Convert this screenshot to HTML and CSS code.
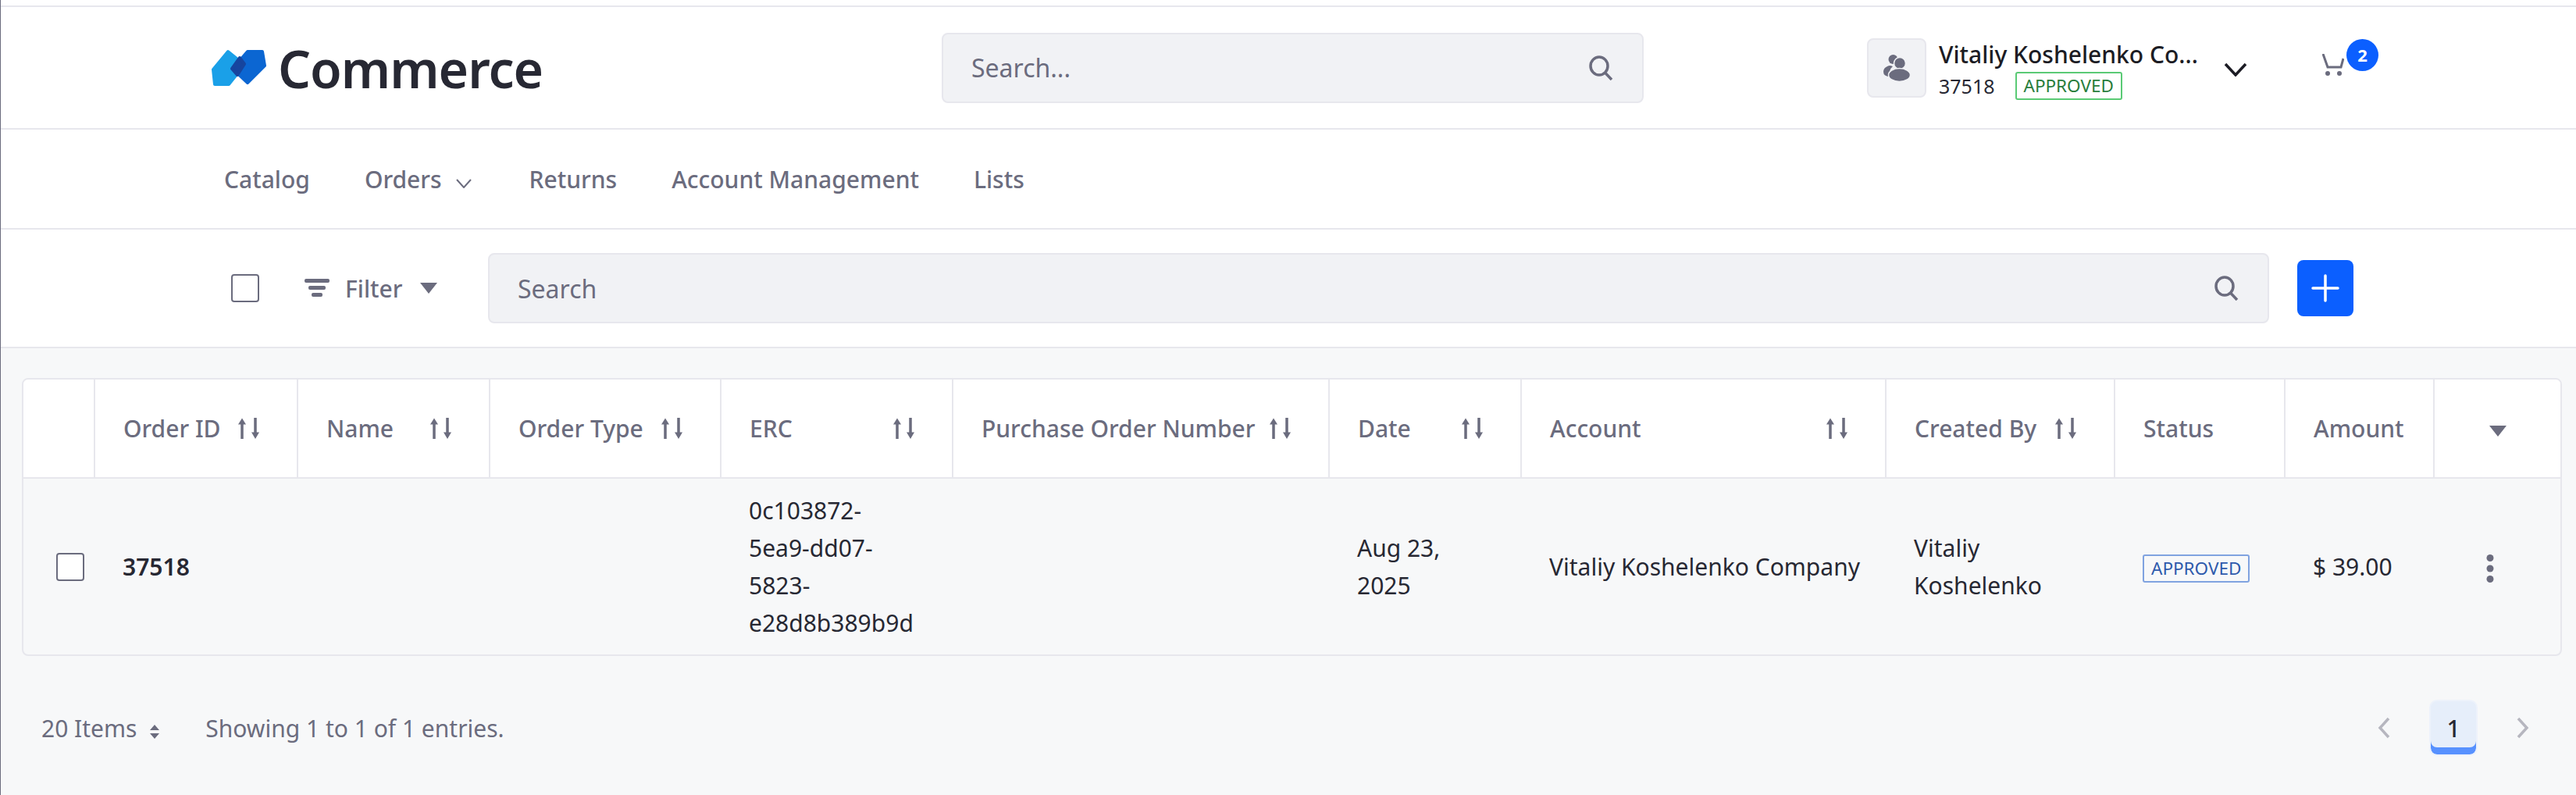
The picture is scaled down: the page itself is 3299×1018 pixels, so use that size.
FILE: index.html
```html
<!DOCTYPE html>
<html lang="en">
<head>
  <meta charset="UTF-8" />
  <title>Commerce - Orders</title>
  <link rel="stylesheet" href="styles.css">
</head>
<body>
  <header class="topbar">
    <div class="brand">
      <svg class="brand-logo" viewBox="0 0 70 48" width="70" height="48">
        <path class="logo-light" d="M21 3 L42 20 L22 45 L4 45 L2 26 Z"/>
        <path class="logo-dark" d="M46 3 L65 3 L68 21 L46 43 L27 25 Z"/>
        <path class="logo-mid" d="M36 11 L42 19 L33 33 L26 25 Z"/>
      </svg>
      <span class="brand-name">Commerce</span>
    </div>
    <div class="top-search">
      <span>Search...</span>
      <svg class="search-icon" viewBox="0 0 32 32" width="32" height="32"><ellipse cx="13" cy="13.500" rx="11" ry="11.500"/><path d="M20.500 22 L29 31"/></svg>
    </div>
    <div class="account">
      <div class="account-pic">
        <svg viewBox="0 0 34 34" width="34" height="34" class="people">
          <circle cx="12.500" cy="6" r="6"/>
          <path d="M5 15 Q8 13 12 15 Q6 20 9 28 Q0 28 0 22 Q0 17 5 15 Z"/>
          <circle class="people-front" cx="21" cy="11" r="7.500"/>
          <ellipse class="people-front" cx="20.500" cy="26" rx="14" ry="8.500"/>
        </svg>
      </div>
      <div class="account-info">
        <div class="account-name">Vitaliy Koshelenko Co...</div>
        <div class="account-meta"><span>37518</span><span class="badge-approved">APPROVED</span></div>
      </div>
      <svg class="account-caret" viewBox="0 0 30 18" width="30" height="18"><path d="M2 2 L15 16 L28 2"/></svg>
    </div>
    <div class="cart">
      <svg viewBox="0 0 28 28" width="28" height="28" class="cart-icon">
        <path d="M1 0 L7 17 H24 L27 6"/>
        <circle cx="7" cy="25" r="3"/><circle cx="22" cy="25" r="3"/>
      </svg>
      <span class="cart-count">2</span>
    </div>
  </header>

  <nav class="mainnav">
    <a>Catalog</a>
    <a>Orders<svg viewBox="0 0 20 12" width="20" height="12"><path d="M1 1 L10 11 L19 1"/></svg></a>
    <a>Returns</a>
    <a>Account Management</a>
    <a>Lists</a>
  </nav>

  <div class="toolbar">
    <span class="checkbox"></span>
    <div class="filter">
      <svg viewBox="0 0 32 24" width="32" height="24"><rect x="0" y="0" width="32" height="5" rx="2"/><rect x="5" y="9" width="22" height="5" rx="2"/><rect x="9" y="18" width="14" height="5" rx="2"/></svg>
      <span>Filter</span>
      <svg class="caret" viewBox="0 0 24 16" width="24" height="16"><path d="M1 1 H23 L12 15 Z"/></svg>
    </div>
    <div class="list-search">
      <span>Search</span>
      <svg class="search-icon" viewBox="0 0 32 32" width="32" height="32"><ellipse cx="13" cy="13.500" rx="11" ry="11.500"/><path d="M20.500 22 L29 31"/></svg>
    </div>
    <button class="add-btn"><svg viewBox="0 0 36 36" width="36" height="36"><path d="M18 2 V34 M2 18 H34"/></svg></button>
  </div>

  <main class="content">
    <table class="orders">
      <colgroup>
        <col class="c-check"><col class="c-id"><col class="c-name"><col class="c-type"><col class="c-erc"><col class="c-po"><col class="c-date"><col class="c-acc"><col class="c-by"><col class="c-status"><col class="c-amount"><col class="c-menu">
      </colgroup>
      <thead>
        <tr>
          <th></th>
          <th><div class="th-in"><span>Order ID</span><svg class="sort" viewBox="0 0 27 27" width="27" height="27"><use href="#sort-arrows"/></svg></div></th>
          <th><div class="th-in"><span>Name</span><svg class="sort" viewBox="0 0 27 27" width="27" height="27"><use href="#sort-arrows"/></svg></div></th>
          <th><div class="th-in"><span>Order Type</span><svg class="sort" viewBox="0 0 27 27" width="27" height="27"><use href="#sort-arrows"/></svg></div></th>
          <th><div class="th-in"><span>ERC</span><svg class="sort" viewBox="0 0 27 27" width="27" height="27"><use href="#sort-arrows"/></svg></div></th>
          <th><div class="th-in"><span>Purchase Order Number</span><svg class="sort" viewBox="0 0 27 27" width="27" height="27"><use href="#sort-arrows"/></svg></div></th>
          <th><div class="th-in"><span>Date</span><svg class="sort" viewBox="0 0 27 27" width="27" height="27"><use href="#sort-arrows"/></svg></div></th>
          <th><div class="th-in"><span>Account</span><svg class="sort" viewBox="0 0 27 27" width="27" height="27"><use href="#sort-arrows"/></svg></div></th>
          <th><div class="th-in"><span>Created By</span><svg class="sort" viewBox="0 0 27 27" width="27" height="27"><use href="#sort-arrows"/></svg></div></th>
          <th>Status</th>
          <th>Amount</th>
          <th class="th-menu"><svg class="caret" viewBox="0 0 24 16" width="24" height="16"><path d="M1 1 H23 L12 15 Z"/></svg></th>
        </tr>
      </thead>
      <tbody>
        <tr>
          <td class="td-check"><span class="checkbox"></span></td>
          <td class="order-id">37518</td>
          <td></td>
          <td></td>
          <td>0c103872-<br>5ea9-dd07-<br>5823-<br>e28d8b389b9d</td>
          <td></td>
          <td>Aug 23,<br>2025</td>
          <td class="td-nowrap">Vitaliy Koshelenko Company</td>
          <td>Vitaliy<br>Koshelenko</td>
          <td><span class="badge-status">APPROVED</span></td>
          <td class="td-nowrap">$ 39.00</td>
          <td class="td-menu"><svg viewBox="0 0 10 36" width="10" height="36"><circle cx="5" cy="4.500" r="4.500"/><circle cx="5" cy="18" r="4.500"/><circle cx="5" cy="31.500" r="4.500"/></svg></td>
        </tr>
      </tbody>
    </table>

    <div class="pager">
      <div class="pager-left">
        <span class="items">20 Items
          <svg viewBox="0 0 14 20" width="14" height="20"><path d="M1 8 L7 1 L13 8 Z M1 12 L7 19 L13 12 Z"/></svg>
        </span>
        <span>Showing 1 to 1 of 1 entries.</span>
      </div>
      <div class="pager-right">
        <svg class="pg-arrow" viewBox="0 0 16 28" width="16" height="28"><path d="M14 2 L3 14 L14 26"/></svg>
        <span class="pg-current">1</span>
        <svg class="pg-arrow" viewBox="0 0 16 28" width="16" height="28"><path d="M2 2 L13 14 L2 26"/></svg>
      </div>
    </div>
  </main>

  <svg class="sprite" width="0" height="0">
    <symbol id="sort-arrows" viewBox="0 0 27 27">
      <path class="sort-line" d="M5 27 V5 M22 0 V22"/>
      <path class="sort-head" d="M0 8.500 L5 0.500 L10 8.500 Z M17 18.500 L22 27 L27 18.500 Z"/>
    </symbol>
  </svg>
</body>
</html>
```

FILE: styles.css
```css
html, body {
  height: 100%;
}
body {
  margin: 0;
  font-family: "Noto Sans", "Open Sans", sans-serif;
  font-size: 30px;
  background: #fff;
  color: #272833;
  border-left: 1px solid #6b6c7e;
  box-sizing: border-box;
  display: flex;
  flex-direction: column;
}
.sprite {
  position: absolute;
}

.topbar {
  display: flex;
  align-items: center;
  flex: none;
  height: 159px;
  box-sizing: border-box;
  margin-top: 7px;
  background: #fff;
  border-top: 2px solid #e7e7ed;
  border-bottom: 2px solid #e7e7ed;
  padding-left: 270px;
}
.brand {
  display: flex;
  align-items: center;
  gap: 15px;
  width: 935px;
}
.brand-logo {
  flex: none;
}
.logo-light, .logo-dark, .logo-mid {
  stroke-width: 4;
  stroke-linejoin: round;
}
.logo-light {
  fill: #1aa0e8;
  stroke: #1aa0e8;
}
.logo-dark {
  fill: #0b66d2;
  stroke: #0b66d2;
}
.logo-mid {
  fill: #16459f;
  stroke: #16459f;
}
.brand-name {
  font-size: 66px;
  font-weight: 600;
  color: #272833;
  letter-spacing: -1px;
}
.top-search {
  width: 899px;
  height: 90px;
  box-sizing: border-box;
  background: #f1f2f5;
  border: 2px solid #e7e7ed;
  border-radius: 8px;
  display: flex;
  align-items: center;
  justify-content: space-between;
  padding: 0 36px;
  color: #6b6c7e;
  font-size: 32px;
}
.search-icon {
  fill: none;
  stroke: #6b6c7e;
  stroke-width: 3.500;
  flex: none;
}
.account {
  display: flex;
  align-items: center;
  margin-left: 286px;
  width: 581px;
  flex: none;
}
.account-pic {
  width: 76px;
  height: 76px;
  flex: none;
  box-sizing: border-box;
  background: #f1f2f5;
  border: 2px solid #e7e7ed;
  border-radius: 8px;
  display: flex;
  align-items: center;
  justify-content: center;
}
.people {
  fill: #6b6c7e;
}
.people-front {
  stroke: #f1f2f5;
  stroke-width: 1.500;
}
.account-info {
  margin-left: 16px;
  width: 341px;
  flex: none;
}
.account-name {
  font-size: 30px;
  font-weight: 500;
  color: #1c1c24;
  white-space: nowrap;
  line-height: 41px;
  margin-top: 3px;
}
.account-meta {
  display: flex;
  align-items: center;
  gap: 26px;
  font-size: 25px;
  margin-top: 2px;
}
.badge-approved {
  border: 2px solid #5aca75;
  border-radius: 3px;
  color: #287d3c;
  font-size: 22.500px;
  padding: 0 9px;
  line-height: 32px;
}
.account-caret {
  margin-left: 24px;
  margin-top: 4px;
  fill: none;
  stroke: #1c1c24;
  stroke-width: 3.500;
}
.cart {
  position: relative;
  width: 28px;
  height: 28px;
  margin-top: -8px;
  margin-left: 2px;
}
.cart-icon {
  display: block;
  fill: none;
  stroke: #6b6c7e;
  stroke-width: 3;
}
.cart-icon circle {
  fill: #6b6c7e;
  stroke: none;
}
.cart-count {
  position: absolute;
  left: 31px;
  top: -19px;
  width: 41px;
  height: 41px;
  border-radius: 50%;
  background: #0b5fff;
  color: #fff;
  font-size: 22px;
  font-weight: 700;
  display: flex;
  align-items: center;
  justify-content: center;
}

.mainnav {
  display: flex;
  align-items: center;
  flex: none;
  gap: 70px;
  height: 128px;
  box-sizing: border-box;
  background: #fff;
  border-bottom: 2px solid #e7e7ed;
  padding-left: 286px;
  color: #6b6c7e;
  font-weight: 500;
  font-size: 30px;
}
.mainnav svg {
  fill: none;
  stroke: #6b6c7e;
  stroke-width: 2;
  margin: 0 4px 0 18px;
}

.toolbar {
  display: flex;
  align-items: center;
  flex: none;
  height: 152px;
  box-sizing: border-box;
  background: #fff;
  border-bottom: 2px solid #e7e7ed;
  padding-left: 295px;
}
.checkbox {
  display: block;
  width: 36px;
  height: 36px;
  box-sizing: border-box;
  background: #fff;
  border: 2px solid #6b6c7e;
  border-radius: 4px;
}
.filter {
  display: flex;
  align-items: center;
  margin-left: 58px;
  color: #6b6c7e;
  font-weight: 500;
  width: 235px;
  fill: #6b6c7e;
}
.filter > span {
  margin-left: 20px;
  margin-right: 22px;
}
.list-search {
  width: 2281px;
  height: 90px;
  box-sizing: border-box;
  background: #f1f2f5;
  border: 2px solid #e7e7ed;
  border-radius: 8px;
  display: flex;
  align-items: center;
  justify-content: space-between;
  padding: 0 36px;
  color: #6b6c7e;
  font-size: 32px;
}
.add-btn {
  margin-left: 36px;
  width: 72px;
  height: 72px;
  border: none;
  border-radius: 8px;
  background: #0b5fff;
  padding: 0;
  display: flex;
  align-items: center;
  justify-content: center;
}
.add-btn svg {
  fill: none;
  stroke: #fff;
  stroke-width: 3.500;
  stroke-linecap: round;
}
.caret {
  fill: #6b6c7e;
}

.content {
  flex: 1;
  background: #f7f8f9;
  padding: 38px 18px 0 27px;
}
.orders {
  width: 100%;
  table-layout: fixed;
  border-collapse: separate;
  border-spacing: 0;
  border: 2px solid #e7e7ed;
  border-radius: 8px;
}
.c-check { width: 92px; }
.c-id { width: 260px; }
.c-name { width: 246px; }
.c-type { width: 296px; }
.c-erc { width: 297px; }
.c-po { width: 482px; }
.c-date { width: 246px; }
.c-acc { width: 467px; }
.c-by { width: 293px; }
.c-status { width: 218px; }
.c-amount { width: 191px; }
.orders th {
  background: #fff;
  height: 127px;
  box-sizing: border-box;
  padding: 0 48px 0 36px;
  text-align: left;
  font-weight: 500;
  color: #6b6c7e;
  border-bottom: 2px solid #e7e7ed;
  border-right: 2px solid #e7e7ed;
}
.orders th:first-child {
  border-top-left-radius: 6px;
}
.orders th:last-child {
  border-right: none;
  border-top-right-radius: 6px;
}
.th-in {
  display: flex;
  align-items: center;
  justify-content: space-between;
  white-space: nowrap;
}
.sort {
  flex: none;
}
.sort-line {
  fill: none;
  stroke: #6b6c7e;
  stroke-width: 3.500;
}
.sort-head {
  fill: #6b6c7e;
}
.orders th.th-menu {
  padding: 0;
  text-align: center;
}
.orders td {
  height: 225px;
  padding: 0 35px;
  color: #272833;
  line-height: 48px;
  vertical-align: middle;
}
.orders td.td-check {
  padding: 0 0 0 42px;
}
.orders td.order-id {
  font-weight: 600;
}
.orders td.td-nowrap {
  white-space: nowrap;
}
.orders td.td-menu {
  padding: 0 20px 0 0;
  text-align: center;
  fill: #6b6c7e;
}
.td-menu svg {
  vertical-align: middle;
}
.badge-status {
  display: inline-block;
  border: 2px solid #80a3e0;
  border-radius: 3px;
  color: #2e5aac;
  font-size: 22.500px;
  line-height: 32px;
  padding: 0 9px;
  vertical-align: middle;
}

.pager {
  display: flex;
  align-items: center;
  justify-content: space-between;
  margin-top: 56px;
  color: #6b6c7e;
  padding: 0 42px 0 25px;
  height: 72px;
}
.pager-left {
  display: flex;
  align-items: center;
  gap: 58px;
}
.items svg {
  fill: #6b6c7e;
  margin-left: 8px;
  vertical-align: -3px;
}
.pager-right {
  display: flex;
  align-items: center;
  gap: 50px;
}
.pg-arrow {
  fill: none;
  stroke: #b6b6bf;
  stroke-width: 3.500;
}
.pg-current {
  width: 62px;
  height: 72px;
  box-sizing: border-box;
  background: #e6eefa;
  border: 2px solid #edf2fb;
  border-radius: 10px;
  box-shadow: inset 0 -9px #5791ff;
  color: #272833;
  display: flex;
  align-items: center;
  justify-content: center;
  font-weight: 500;
}
```
